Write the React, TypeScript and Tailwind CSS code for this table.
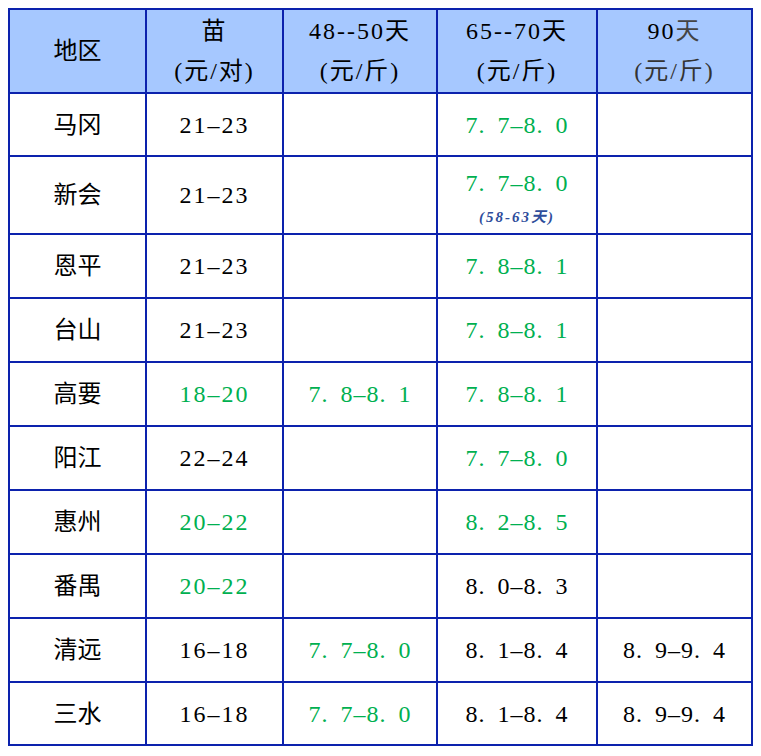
import React from 'react';

// 价格表：地区 / 苗 / 48--50天 / 65--70天 / 90天
type Cell = { text: string; green?: boolean; note?: string };

const rows: { area: string; seedling: Cell; d48: Cell; d65: Cell; d90: Cell }[] = [
  { area: '马冈', seedling: { text: '21-23' }, d48: { text: '' }, d65: { text: '7.7-8.0', green: true }, d90: { text: '' } },
  {
    area: '新会',
    seedling: { text: '21-23' },
    d48: { text: '' },
    d65: { text: '7.7-8.0', green: true, note: '(58-63天)' },
    d90: { text: '' },
  },
  { area: '恩平', seedling: { text: '21-23' }, d48: { text: '' }, d65: { text: '7.8-8.1', green: true }, d90: { text: '' } },
  { area: '台山', seedling: { text: '21-23' }, d48: { text: '' }, d65: { text: '7.8-8.1', green: true }, d90: { text: '' } },
  {
    area: '高要',
    seedling: { text: '18-20', green: true },
    d48: { text: '7.8-8.1', green: true },
    d65: { text: '7.8-8.1', green: true },
    d90: { text: '' },
  },
  { area: '阳江', seedling: { text: '22-24' }, d48: { text: '' }, d65: { text: '7.7-8.0', green: true }, d90: { text: '' } },
  { area: '惠州', seedling: { text: '20-22', green: true }, d48: { text: '' }, d65: { text: '8.2-8.5', green: true }, d90: { text: '' } },
  { area: '番禺', seedling: { text: '20-22', green: true }, d48: { text: '' }, d65: { text: '8.0-8.3' }, d90: { text: '' } },
  {
    area: '清远',
    seedling: { text: '16-18' },
    d48: { text: '7.7-8.0', green: true },
    d65: { text: '8.1-8.4' },
    d90: { text: '8.9-9.4' },
  },
  {
    area: '三水',
    seedling: { text: '16-18' },
    d48: { text: '7.7-8.0', green: true },
    d65: { text: '8.1-8.4' },
    d90: { text: '8.9-9.4' },
  },
];

const FONT = "font-[family-name:'Liberation_Serif','Noto_Sans_CJK_SC',serif]";

// the periods in the source have a wide gap after them
const Price = ({ text }: { text: string }) => {
  const chars = text.replace('-', '–').split('');
  return (
    <span className="tracking-[1px]">
      {chars.map((c, i) =>
        c === '.' ? (
          <span key={i} className="pr-[12px]">
            .
          </span>
        ) : (
          <span key={i}>{c}</span>
        )
      )}
    </span>
  );
};

const Range = ({ text }: { text: string }) => (
  <span className="tracking-[2px]">{text.replace('-', '–')}</span>
);

const ValueCell = ({ cell, price }: { cell: Cell; price?: boolean }) => {
  const color = cell.green ? 'text-[#00b050]' : 'text-black';

  if (cell.note) {
    return (
      <div className="bg-white flex flex-col items-center pt-[10px]">
        <div className={`leading-8 ${color}`}>{price ? <Price text={cell.text} /> : <Range text={cell.text} />}</div>
        <div className="mt-[8px] text-[15px] leading-5 italic font-semibold tracking-[2px] text-[#2e4d9b]">
          {cell.note}
        </div>
      </div>
    );
  }

  return (
    <div className={`bg-white flex items-center justify-center leading-8 ${color}`}>
      {cell.text && (price ? <Price text={cell.text} /> : <Range text={cell.text} />)}
    </div>
  );
};

const HeaderCell = ({ top, bottom, dim }: { top: React.ReactNode; bottom: string; dim?: boolean }) => (
  <div className="bg-[#a6c8ff] flex flex-col items-center justify-center leading-[40px] tracking-[2px]">
    <div>{top}</div>
    <div className={dim ? 'text-[#333]' : ''}>{bottom}</div>
  </div>
);

export default function App() {
  return (
    <div className="bg-white w-[761px] h-[756px] pt-[8px] pl-[8px]">
      <div
        className={`${FONT} text-[24px] text-black w-[745px] grid grid-cols-[135px_135px_152px_158px_153px] grid-rows-[82px_61px_76px_repeat(7,62px)_61px] gap-[2px] p-[2px] bg-[#0c22ad]`}
      >
        <div className="bg-[#a6c8ff] flex items-center justify-center">地区</div>
        <HeaderCell top="苗" bottom="(元/对)" />
        <HeaderCell top="48--50天" bottom="(元/斤)" />
        <HeaderCell top="65--70天" bottom="(元/斤)" />
        <HeaderCell
          top={
            <>
              90<span className="text-[#444]">天</span>
            </>
          }
          bottom="(元/斤)"
          dim
        />

        {rows.map((r) => (
          <React.Fragment key={r.area}>
            <div className="bg-white flex items-center justify-center">{r.area}</div>
            <ValueCell cell={r.seedling} />
            <ValueCell cell={r.d48} price />
            <ValueCell cell={r.d65} price />
            <ValueCell cell={r.d90} price />
          </React.Fragment>
        ))}
      </div>
    </div>
  );
}
